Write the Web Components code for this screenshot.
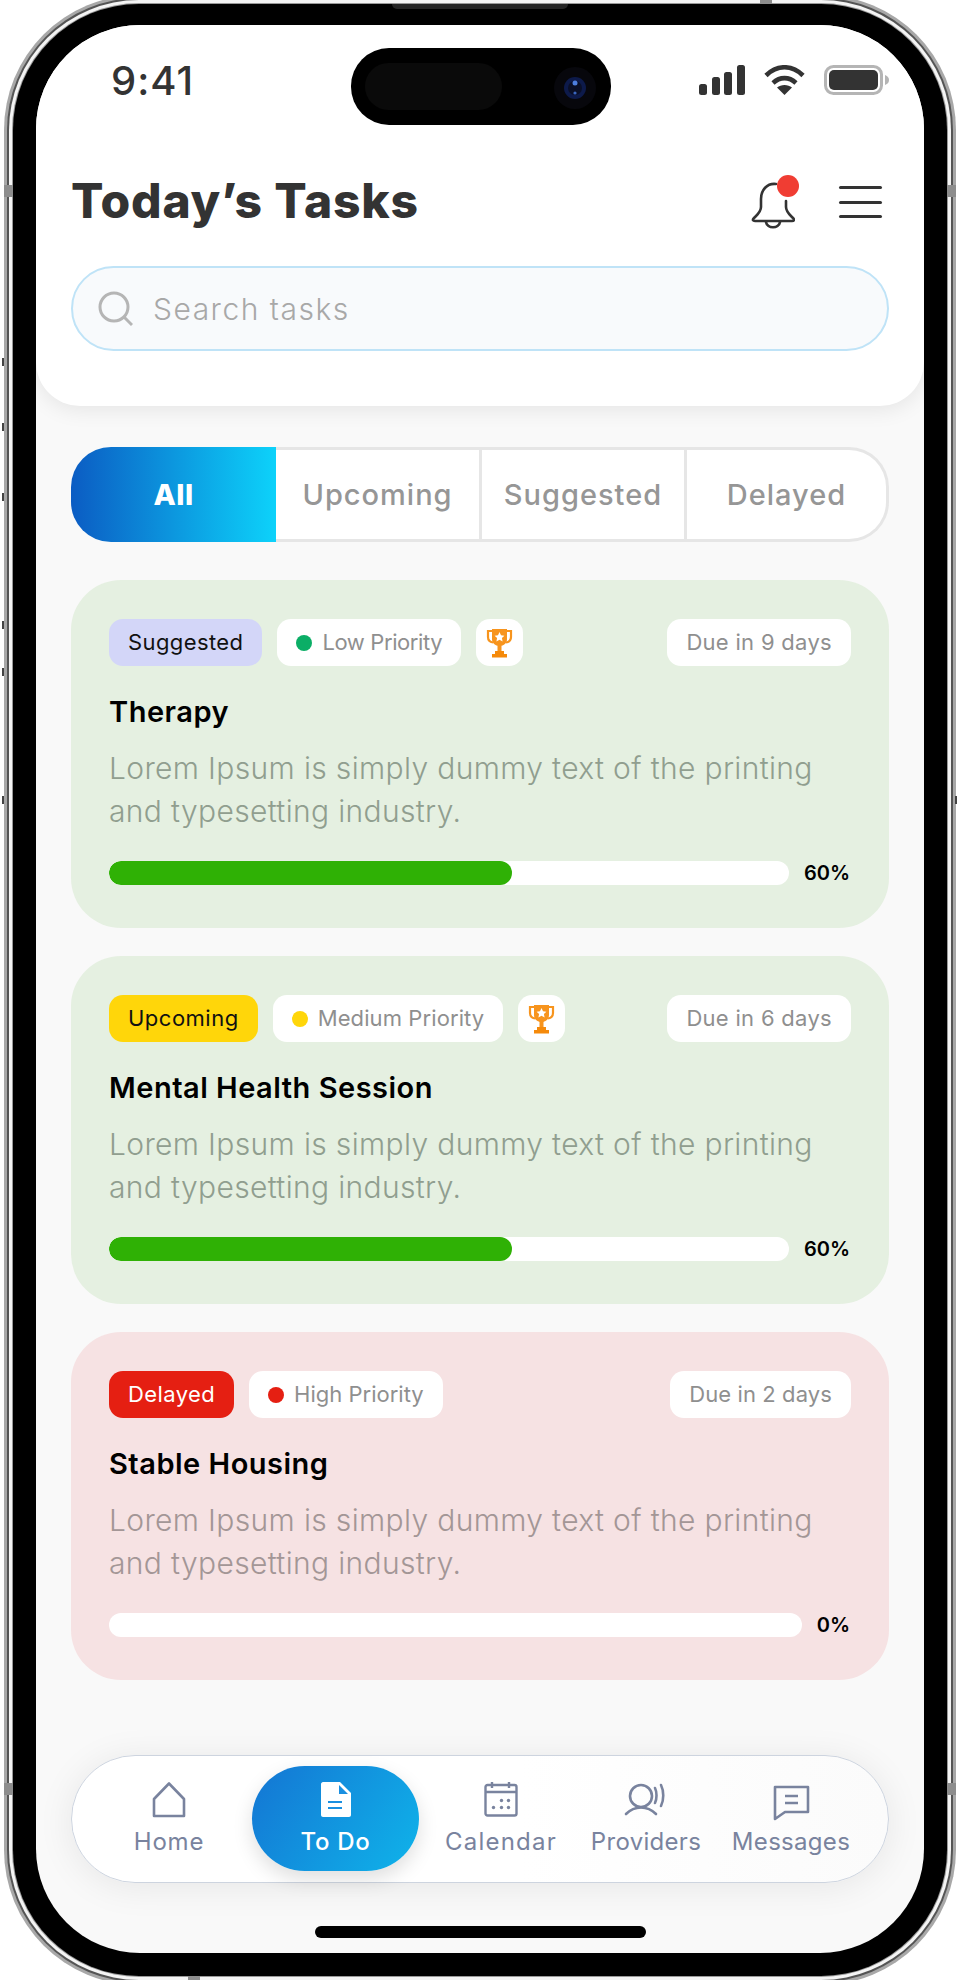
<!DOCTYPE html>
<html lang="en">
<head>
<meta charset="utf-8">
<title>Today's Tasks</title>
<style>
  html, body {
    margin: 0;
    padding: 0;
    background: #fff;
    font-family: Inter, "Liberation Sans", sans-serif;
  }
  body {
    height: 1980px;
    overflow: hidden;
  }
</style>
</head>
<body>
<phone-frame>
  <tasks-header></tasks-header>
  <filter-tabs></filter-tabs>
  <task-list>
    <task-card tone="green" progress="60" fill="59.3">
      <task-tag slot="tags" kind="suggested">Suggested</task-tag>
      <task-tag slot="tags" dot="#0bae66" style="letter-spacing:-0.4px">Low Priority</task-tag>
      <task-tag slot="tags" kind="trophy"></task-tag>
      <task-tag slot="due" kind="due">Due in 9 days</task-tag>
      <span slot="heading">Therapy</span>
      Lorem Ipsum is simply dummy text of the printing<br>and typesetting industry.
    </task-card>
    <task-card tone="green" progress="60" fill="59.3">
      <task-tag slot="tags" kind="upcoming">Upcoming</task-tag>
      <task-tag slot="tags" dot="#ffd60a" style="letter-spacing:0.1px">Medium Priority</task-tag>
      <task-tag slot="tags" kind="trophy"></task-tag>
      <task-tag slot="due" kind="due">Due in 6 days</task-tag>
      <span slot="heading">Mental Health Session</span>
      Lorem Ipsum is simply dummy text of the printing<br>and typesetting industry.
    </task-card>
    <task-card tone="red" progress="0" fill="0">
      <task-tag slot="tags" kind="delayed">Delayed</task-tag>
      <task-tag slot="tags" dot="#e51f12" style="letter-spacing:0">High Priority</task-tag>
      <task-tag slot="due" kind="due" style="letter-spacing:0.1px">Due in 2 days</task-tag>
      <span slot="heading">Stable Housing</span>
      Lorem Ipsum is simply dummy text of the printing<br>and typesetting industry.
    </task-card>
  </task-list>
  <bottom-nav></bottom-nav>
</phone-frame>

<script>
class PhoneFrame extends HTMLElement {
  constructor() {
    super();
    this.attachShadow({ mode: 'open' });
  }

  connectedCallback() {
    // little dark ends of the side buttons, y in page pixels
    const tips = [362, 427, 497, 625, 672, 800]
      .map(y => `<div class="tip" style="left:-11px;top:${y - 8}px"></div>`)
      .join('');

    this.shadowRoot.innerHTML = `
      <style>
        :host {
          display: block;
          position: relative;
          box-sizing: border-box;
          width: 934px;
          height: 1972px;
          margin: 4px 0 0 13px;
          padding: 21px 23px 23px;
          background: #000;
          border-radius: 126px;
          box-shadow: 0 0 0 1px #999, 0 0 0 4px #f4f4f4, 0 0 0 6px #555, 0 0 0 9px #a8a8a8;
        }
        .screen {
          display: flex;
          flex-direction: column;
          height: 100%;
          background: #f9f9f9;
          border-radius: 104px;
          overflow: hidden;
        }
        .home-bar {
          flex: none;
          width: 331px;
          height: 12px;
          margin: 43px auto 15px;
          background: #000;
          border-radius: 6px;
        }
        .speaker {
          position: absolute;
          left: 379px;
          top: 0;
          width: 176px;
          height: 5px;
          background: #242424;
          border-radius: 0 0 5px 5px;
        }
        .band {
          position: absolute;
          width: 9px;
          height: 12px;
          background: #8d8d8d;
        }
        .band.top, .band.bottom {
          width: 12px;
          height: 4px;
        }
        .tip {
          position: absolute;
          width: 2px;
          height: 8px;
          background: #444;
        }
      </style>
      <div class="speaker"></div>
      <div class="band" style="left:-9px;top:181px"></div>
      <div class="band" style="right:-9px;top:181px"></div>
      <div class="band" style="left:-9px;top:1779px"></div>
      <div class="band" style="right:-9px;top:1779px"></div>
      <div class="band top" style="left:747px;top:-4px"></div>
      <div class="band bottom" style="left:175px;bottom:-4px"></div>
      ${tips}
      <div class="tip" style="right:-10px;top:792px"></div>
      <div class="screen">
        <slot></slot>
        <div class="home-bar"></div>
      </div>
    `;
  }
}

class StatusBar extends HTMLElement {
  constructor() {
    super();
    this.attachShadow({ mode: 'open' });
  }

  connectedCallback() {
    this.shadowRoot.innerHTML = `
      <style>
        :host {
          display: grid;
          grid-template-columns: 315px 260px 1fr;
          height: 77px;
          margin: 23px -35px 0;
        }
        .time {
          padding: 10px 0 0 75px;
          font-size: 40px;
          line-height: 46px;
          font-weight: 500;
          letter-spacing: 1px;
          color: #333;
        }
        .island {
          position: relative;
          background: #000;
          border-radius: 38px;
        }
        .island i {
          position: absolute;
          left: 14px;
          top: 15px;
          width: 137px;
          height: 47px;
          background: #0a0a0a;
          border-radius: 24px;
        }
        .island svg {
          position: absolute;
          left: 202px;
          top: 18px;
        }
        .icons {
          display: flex;
          justify-content: flex-end;
          align-items: flex-start;
          gap: 19px;
          padding: 17px 34px 0 0;
        }
        .battery {
          display: block;
          margin-right: 1px;
        }
      </style>
      <div class="time">9:41</div>
      <div class="island">
        <i></i>
        <svg width="44" height="44" viewBox="0 0 44 44">
          <circle cx="22" cy="22" r="21" fill="#07070c"/>
          <circle cx="22" cy="22" r="11" fill="#0d1a4a"/>
          <circle cx="22" cy="22" r="7" fill="#0a0f26"/>
          <circle cx="22" cy="17" r="2.5" fill="#4d7fe0"/>
          <circle cx="22" cy="27" r="1.6" fill="#3a66c0"/>
        </svg>
      </div>
      <div class="icons">
        <svg width="46" height="30" viewBox="0 0 46 30" fill="#333">
          <rect x="0" y="19" width="8" height="11" rx="2.5"/>
          <rect x="13" y="12" width="8" height="18" rx="2.5"/>
          <rect x="25" y="7" width="8" height="23" rx="2.5"/>
          <rect x="38" y="0" width="8" height="30" rx="2.5"/>
        </svg>
        <svg width="41" height="30" viewBox="0 0 41 30" fill="none" stroke="#333">
          <path d="M2 10.5C13 -0.5 28 -0.5 39 10.5" stroke-width="4.6"/>
          <path d="M9 18C16 11.5 25 11.5 32 18" stroke-width="4.6"/>
          <path d="M20.5 30L13 22.6C17 19 24 19 28 22.6Z" fill="#333" stroke="none"/>
        </svg>
        <svg class="battery" width="65" height="30" viewBox="0 0 65 30">
          <rect x="1.5" y="1.5" width="56" height="27" rx="8" fill="none" stroke="#b5b5b5" stroke-width="3"/>
          <rect x="5" y="5" width="49" height="20" rx="5" fill="#333"/>
          <path d="M61 10C64 11 65 13 65 15C65 17 64 19 61 20Z" fill="#b5b5b5"/>
        </svg>
      </div>
    `;
  }
}

class SearchBox extends HTMLElement {
  constructor() {
    super();
    this.attachShadow({ mode: 'open' });
  }

  connectedCallback() {
    this.shadowRoot.innerHTML = `
      <style>
        :host {
          display: flex;
          align-items: center;
          gap: 20px;
          box-sizing: border-box;
          height: 85px;
          margin-top: 34px;
          padding-left: 24px;
          background: #f8fafc;
          border: 2px solid #bfe3f7;
          border-radius: 43px;
        }
        span {
          font-size: 30px;
          font-weight: 300;
          letter-spacing: 1.5px;
          color: #a8a8a8;
        }
      </style>
      <svg width="36" height="36" viewBox="0 0 36 36" fill="none" stroke="#b5b5b5" stroke-width="3">
        <circle cx="17" cy="16" r="14"/>
        <path d="M27 26L35 34"/>
      </svg>
      <span>Search tasks</span>
    `;
  }
}

class TasksHeader extends HTMLElement {
  constructor() {
    super();
    this.attachShadow({ mode: 'open' });
  }

  connectedCallback() {
    this.shadowRoot.innerHTML = `
      <style>
        :host {
          display: block;
          flex: none;
          padding: 0 35px 55px;
          background: #fff;
          border-radius: 0 0 44px 44px;
          box-shadow: 0 3px 22px rgba(0, 0, 0, 0.09);
        }
        .row {
          display: flex;
          align-items: center;
          height: 62px;
          margin-top: 45px;
        }
        h1 {
          flex: 1;
          margin: 0;
          font-size: 48px;
          line-height: 62px;
          font-weight: 800;
          letter-spacing: 0.8px;
          color: #333;
        }
        .bell {
          position: relative;
          width: 44px;
          height: 48px;
          margin: 9px 44px 0 0;
        }
        .bell i {
          position: absolute;
          left: 26px;
          top: -7px;
          width: 22px;
          height: 22px;
          background: #f03d33;
          border-radius: 50%;
        }
        .menu {
          display: flex;
          flex-direction: column;
          gap: 11.5px;
          width: 43px;
          margin: 2px 7px 0 0;
        }
        .menu b {
          height: 3px;
          background: #333;
          border-radius: 2px;
        }
      </style>
      <status-bar></status-bar>
      <div class="row">
        <h1>Today’s Tasks</h1>
        <div class="bell">
          <svg width="44" height="48" viewBox="0 0 44 48" fill="none" stroke="#333" stroke-width="2.6" stroke-linecap="round" stroke-linejoin="round">
            <path d="M25 2C16 1 10 8 10 17V25C10 30 6 33 3 36C1 38 2 39 4 39H41C43 39 44 38 42 36C39 33 35 30 35 25V19"/>
            <path d="M15 40C16 47 28 47 29 40"/>
          </svg>
          <i></i>
        </div>
        <div class="menu"><b></b><b></b><b></b></div>
      </div>
      <search-box></search-box>
    `;
  }
}

class FilterTabs extends HTMLElement {
  constructor() {
    super();
    this.attachShadow({ mode: 'open' });
  }

  connectedCallback() {
    this.shadowRoot.innerHTML = `
      <style>
        :host {
          display: flex;
          flex: none;
          height: 95px;
          margin: 41px 35px 0;
        }
        div {
          display: flex;
          align-items: center;
          justify-content: center;
          box-sizing: border-box;
          font-size: 29px;
          font-weight: 500;
          letter-spacing: 1px;
          color: #969696;
          background: #fff;
          border: 3px solid #e6e6e6;
          border-left: 0;
        }
        .active {
          width: 205px;
          font-weight: 800;
          letter-spacing: 0.5px;
          color: #fff;
          border: 0;
          border-radius: 40px 0 0 40px;
          background: linear-gradient(90deg, #0b5cc3, #0dd2fa);
        }
        .mid {
          width: 206px;
        }
        .mid + .mid {
          width: 205px;
        }
        .last {
          flex: 1;
          border-radius: 0 40px 40px 0;
        }
      </style>
      <div class="active">All</div>
      <div class="mid">Upcoming</div>
      <div class="mid">Suggested</div>
      <div class="last">Delayed</div>
    `;
  }
}

class TaskList extends HTMLElement {
  constructor() {
    super();
    this.attachShadow({ mode: 'open' });
  }

  connectedCallback() {
    this.shadowRoot.innerHTML = `
      <style>
        :host {
          display: flex;
          flex-direction: column;
          gap: 28px;
          margin: 38px 35px 0;
        }
      </style>
      <slot></slot>
    `;
  }
}

class TaskTag extends HTMLElement {
  constructor() {
    super();
    this.attachShadow({ mode: 'open' });
  }

  connectedCallback() {
    const dot = this.getAttribute('dot');
    const trophy = this.getAttribute('kind') === 'trophy';

    this.shadowRoot.innerHTML = `
      <style>
        :host {
          display: inline-flex;
          align-items: center;
          box-sizing: border-box;
          height: 47px;
          padding: 0 19px 2px;
          gap: 10px;
          font-size: 22px;
          font-weight: 400;
          letter-spacing: 0.3px;
          color: #8f8f8f;
          white-space: nowrap;
          background: #fff;
          border-radius: 14px;
        }
        :host([kind="suggested"]) { background: #d3d6f8; color: #111; letter-spacing: 0.4px; }
        :host([kind="upcoming"]) { background: #ffd60a; color: #111; letter-spacing: 0.5px; }
        :host([kind="delayed"]) { background: #e51f12; color: #fff; letter-spacing: 0.4px; }
        :host([kind="trophy"]) { width: 47px; padding: 0; justify-content: center; }
        i {
          width: 16px;
          height: 16px;
          margin-top: 2px;
          border-radius: 50%;
        }
      </style>
      ${dot ? `<i style="background:${dot}"></i>` : ''}
      ${trophy ? `
        <svg width="27" height="30" viewBox="0 0 27 30">
          <path d="M6 3H2V9C2 12 4 14 7 14.500M21 3H25V9C25 12 23 14 20 14.500" fill="none" stroke="#f7941d" stroke-width="2.200"/>
          <path d="M6 1H21V11C21 15 18 18 13.500 18C9 18 6 15 6 11Z" fill="#f7941d"/>
          <path d="M13.500 4L15 7.300L18.400 7.700L15.900 10L16.600 13.400L13.500 11.700L10.400 13.400L11.100 10L8.600 7.700L12 7.300Z" fill="#fff"/>
          <rect x="11.500" y="17" width="4" height="6" fill="#f7941d"/>
          <path d="M9 23H18V26H21V29.500H6V26H9Z" fill="#f58a0b"/>
        </svg>` : ''}
      <slot></slot>
    `;
  }
}

class TaskCard extends HTMLElement {
  constructor() {
    super();
    this.attachShadow({ mode: 'open' });
  }

  connectedCallback() {
    const progress = this.getAttribute('progress');
    const fill = this.getAttribute('fill');

    this.shadowRoot.innerHTML = `
      <style>
        :host {
          display: block;
          box-sizing: border-box;
          height: 348px;
          padding: 39px 38px 0;
          border-radius: 50px;
          background: #e5f0e1;
          --desc: #909e8f;
        }
        :host([tone="red"]) {
          background: #f6e2e3;
          --desc: #a39696;
        }
        .tags {
          display: flex;
          gap: 15px;
          height: 47px;
        }
        .due {
          margin-left: auto;
        }
        h2 {
          margin: 26px 0 0;
          font-size: 29px;
          line-height: 40px;
          font-weight: 600;
          letter-spacing: 0.5px;
          color: #000;
        }
        p {
          margin: 15px 0 0;
          font-size: 30px;
          line-height: 43px;
          font-weight: 300;
          letter-spacing: 0.35px;
          color: var(--desc);
          white-space: nowrap;
        }
        .progress {
          display: flex;
          align-items: center;
          gap: 15px;
          margin-top: 28px;
          padding-right: 1px;
        }
        .track {
          flex: 1;
          height: 24px;
          background: #fff;
          border-radius: 12px;
          overflow: hidden;
        }
        .fill {
          height: 100%;
          background: #2fb105;
          border-radius: 12px;
        }
        .pct {
          font-size: 20px;
          font-weight: 600;
          color: #000;
        }
      </style>
      <div class="tags">
        <slot name="tags"></slot>
        <div class="due"><slot name="due"></slot></div>
      </div>
      <h2><slot name="heading"></slot></h2>
      <p><slot></slot></p>
      <div class="progress">
        <div class="track"><div class="fill" style="width:${fill}%"></div></div>
        <span class="pct">${progress}%</span>
      </div>
    `;
  }
}

const NAV_ICONS = {
  home: `<svg width="36" height="36" viewBox="0 0 36 36" fill="none" stroke="currentColor" stroke-width="2.600" stroke-linejoin="round">
      <path d="M18 1.500L3 17V34H33V17Z"/>
    </svg>`,
  todo: `<svg width="36" height="36" viewBox="0 0 36 36">
      <path d="M5 0H22L33 11V33C33 34 32 35 31 35H5C4 35 3 34 3 33V2C3 1 4 0 5 0Z" fill="#fff"/>
      <path d="M21 3L30 12H21Z" fill="#1a8fe0"/>
      <path d="M10 20H24M10 26H24" stroke="#1a8fe0" stroke-width="2.200"/>
    </svg>`,
  calendar: `<svg width="36" height="36" viewBox="0 0 36 36" fill="none" stroke="currentColor" stroke-width="2.400" stroke-linejoin="round">
      <rect x="2.500" y="3" width="31" height="30.500" rx="2"/>
      <path d="M2.500 10H33.500M9 0V6M26 0V6"/>
      <g fill="currentColor" stroke="none">
        <circle cx="18.500" cy="18.500" r="1.700"/>
        <circle cx="25.500" cy="18.500" r="1.700"/>
        <circle cx="10.500" cy="25.500" r="1.700"/>
        <circle cx="18.500" cy="25.500" r="1.700"/>
        <circle cx="25.500" cy="25.500" r="1.700"/>
      </g>
    </svg>`,
  providers: `<svg width="44" height="36" viewBox="0 0 44 36" fill="none" stroke="currentColor" stroke-width="2.600" stroke-linecap="round">
      <circle cx="17" cy="14" r="11"/>
      <path d="M2 32C7 27 12 25.500 17 25.500C22 25.500 27 27 32 32"/>
      <path d="M31 6C33 10 33 17 31 21M37 3C40 9 40 18 37 24"/>
    </svg>`,
  messages: `<svg width="36" height="38" viewBox="0 0 36 38" fill="none" stroke="currentColor" stroke-width="2.600" stroke-linejoin="round">
      <path d="M2 5H35V30H12L2 37Z"/>
      <path d="M12 14H25M12 21H25"/>
    </svg>`
};

class NavItem extends HTMLElement {
  constructor() {
    super();
    this.attachShadow({ mode: 'open' });
  }

  connectedCallback() {
    this.shadowRoot.innerHTML = `
      <style>
        :host {
          display: flex;
          flex-direction: column;
          align-items: center;
          box-sizing: border-box;
          height: 105px;
          padding-top: 16px;
          font-size: 24px;
          font-weight: 400;
          letter-spacing: 0.3px;
          color: #79839e;
        }
        :host([active]) {
          color: #fff;
          font-weight: 500;
          background: linear-gradient(125deg, #1475d3, #0fb4ea);
          border-radius: 53px;
          box-shadow: 0 8px 20px rgba(0, 0, 0, 0.13);
        }
        svg {
          display: block;
          overflow: visible;
        }
        .icon {
          height: 36px;
        }
        .label {
          margin-top: 8px;
          line-height: 32px;
          white-space: nowrap;
        }
      </style>
      <div class="icon">${NAV_ICONS[this.getAttribute('icon')]}</div>
      <div class="label"><slot></slot></div>
    `;
  }
}

class BottomNav extends HTMLElement {
  constructor() {
    super();
    this.attachShadow({ mode: 'open' });
  }

  connectedCallback() {
    this.shadowRoot.innerHTML = `
      <style>
        :host {
          display: grid;
          grid-template-columns: 166px 167px 164px 126px 164px;
          flex: none;
          box-sizing: border-box;
          height: 128px;
          margin: auto 35px 0;
          padding: 10px 15px 0 14px;
          background: linear-gradient(90deg, #fff 55%, #fbfbfb);
          border: 1px solid #cdd4df;
          border-radius: 64px;
          box-shadow: 0 4px 36px rgba(0, 0, 0, 0.08);
        }
      </style>
      <nav-item icon="home" style="letter-spacing:0.8px">Home</nav-item>
      <nav-item icon="todo" active style="letter-spacing:0.7px">To Do</nav-item>
      <nav-item icon="calendar" style="letter-spacing:1.2px">Calendar</nav-item>
      <nav-item icon="providers">Providers</nav-item>
      <nav-item icon="messages">Messages</nav-item>
    `;
  }
}

customElements.define('phone-frame', PhoneFrame);
customElements.define('status-bar', StatusBar);
customElements.define('search-box', SearchBox);
customElements.define('tasks-header', TasksHeader);
customElements.define('filter-tabs', FilterTabs);
customElements.define('task-list', TaskList);
customElements.define('task-tag', TaskTag);
customElements.define('task-card', TaskCard);
customElements.define('nav-item', NavItem);
customElements.define('bottom-nav', BottomNav);
</script>
</body>
</html>
